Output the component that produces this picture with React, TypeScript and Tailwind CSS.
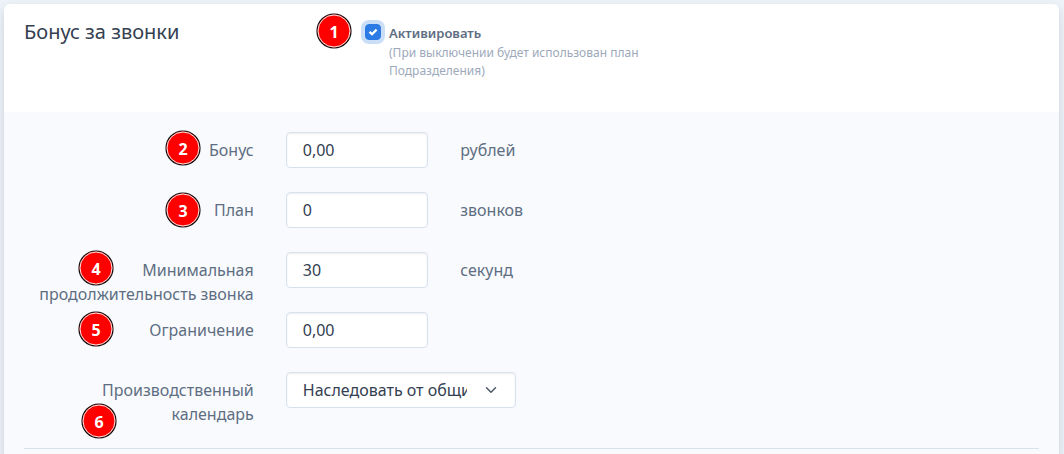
import { useState } from "react";
import { clsx } from "clsx";

interface Field {
  id: string;
  label: string;
  value: string;
  unit?: string;
  step: number;
  badgeCls: string;
}

const FIELDS: Field[] = [
  { id: "bonus", label: "Бонус", value: "0,00", unit: "рублей", step: 2, badgeCls: "right-[69px] -top-0.5" },
  { id: "plan", label: "План", value: "0", unit: "звонков", step: 3, badgeCls: "right-[69px] top-0" },
  { id: "min_duration", label: "Минимальная продолжительность звонка", value: "30", unit: "секунд", step: 4, badgeCls: "right-[156px] -top-0.5" },
  { id: "limit", label: "Ограничение", value: "0,00", step: 5, badgeCls: "right-[156px] -top-px" },
];

const CALENDARS = ["Наследовать от общих настроек", "Пятидневная неделя", "Шестидневная неделя"];

const CONTROL =
  "h-9 w-full rounded border border-[#d8e2ef] bg-white pl-4 text-base text-[#344050] shadow-[inset_0_1px_2px_rgba(0,0,0,0.075)] outline-none focus:border-[#96bdf2]";

function Step({ n, className }: { n: number; className: string }) {
  return (
    <svg viewBox="0 0 36 36" className={clsx("absolute size-9", className)}>
      <circle cx="18" cy="18" r="17" fill="#ff0000" stroke="#111111" strokeWidth="1.2" />
      <circle cx="18" cy="18" r="16" fill="none" stroke="#ffffff" strokeWidth="0.9" />
      <text x="18" y="25" textAnchor="middle" fill="#ffffff" className="text-base font-bold">{n}</text>
    </svg>
  );
}

function FieldLabel({ htmlFor, label, step, badgeCls }: { htmlFor: string; label: string; step: number; badgeCls: string }) {
  return (
    <div className="relative col-span-3 px-4 pt-1.5 text-right">
      <label htmlFor={htmlFor}>{label}</label>
      <Step n={step} className={badgeCls} />
    </div>
  );
}

export default function App() {
  const [active, setActive] = useState(true);
  const [values, setValues] = useState<Record<string, string>>(
    Object.fromEntries(FIELDS.map((f) => [f.id, f.value]))
  );
  const [calendar, setCalendar] = useState(CALENDARS[0]);

  return (
    <div className="flex min-h-screen flex-col bg-[#edf2f9] pt-1 pr-[5px] pl-1 font-['Noto_Sans',sans-serif] text-base text-[#5e6e82]">
      <div className="flex flex-1 flex-col rounded-t-md bg-white shadow-[0_7px_14px_0_rgba(65,69,88,0.1),0_3px_6px_0_rgba(0,0,0,0.07)]">
        <div className="px-5 py-4">
          <div className="-mx-4 grid grid-cols-12">
            <h5 className="col-span-4 px-4 text-xl leading-6 text-[#344050]">Бонус за звонки</h5>
            <div className="relative col-span-4 mb-4 flex gap-2 pr-4 pl-2">
              <Step n={1} className="-top-[7px] -left-[41px]" />
              <span className="mt-1 grid size-4 shrink-0">
                <input
                  id="active"
                  type="checkbox"
                  checked={active}
                  onChange={(e) => setActive(e.target.checked)}
                  className="col-start-1 row-start-1 size-4 appearance-none rounded border border-[#b6c1d2] bg-white ring-4 ring-[#2c7be5]/25 checked:border-[#2c7be5] checked:bg-[#2c7be5]"
                />
                {active && (
                  <svg viewBox="0 0 16 16" className="pointer-events-none col-start-1 row-start-1 size-4" fill="none" stroke="#ffffff" strokeWidth="2.3">
                    <path d="M4.5 7.8 7 10.2 11.6 5.6" />
                  </svg>
                )}
              </span>
              <div>
                <label htmlFor="active" className="block pt-0.5 text-[13px] leading-[22px] font-semibold">Активировать</label>
                <p className="text-xs leading-[18px] text-[#9da9bb]">(При выключении будет использован план Подразделения)</p>
              </div>
            </div>
          </div>
        </div>

        <div className="flex-1 bg-[#f9fafd] px-5 pt-5">
          {FIELDS.map((f) => (
            <div key={f.id} className="-mx-4 grid grid-cols-12">
              <FieldLabel htmlFor={f.id} label={f.label} step={f.step} badgeCls={f.badgeCls} />
              <div className="col-span-2 mb-6 px-4">
                <input
                  id={f.id}
                  type="text"
                  value={values[f.id]}
                  onChange={(e) => setValues((v) => ({ ...v, [f.id]: e.target.value }))}
                  className={clsx(CONTROL, "pr-4")}
                />
              </div>
              {f.unit && <span className="col-span-3 px-4 pt-1.5">{f.unit}</span>}
            </div>
          ))}

          <div className="-mx-4 grid grid-cols-12">
            <FieldLabel htmlFor="calendar" label="Производственный календарь" step={6} badgeCls="right-[153px] top-[31px]" />
            <div className="col-span-3 mb-6 grid px-4">
              <select
                id="calendar"
                value={calendar}
                onChange={(e) => setCalendar(e.target.value)}
                className={clsx(CONTROL, "col-start-1 row-start-1 appearance-none pr-12")}
              >
                {CALENDARS.map((c) => <option key={c}>{c}</option>)}
              </select>
              <svg viewBox="0 0 16 16" className="pointer-events-none z-10 col-start-1 row-start-1 mr-[19px] size-3 self-center justify-self-end" fill="none" stroke="#4d5969" strokeWidth="2" strokeLinecap="round" strokeLinejoin="round">
                <path d="m2 5 6 6 6-6" />
              </svg>
            </div>
          </div>

          <hr className="mt-4 border-[#d8e2ef]" />
        </div>
      </div>
    </div>
  );
}
